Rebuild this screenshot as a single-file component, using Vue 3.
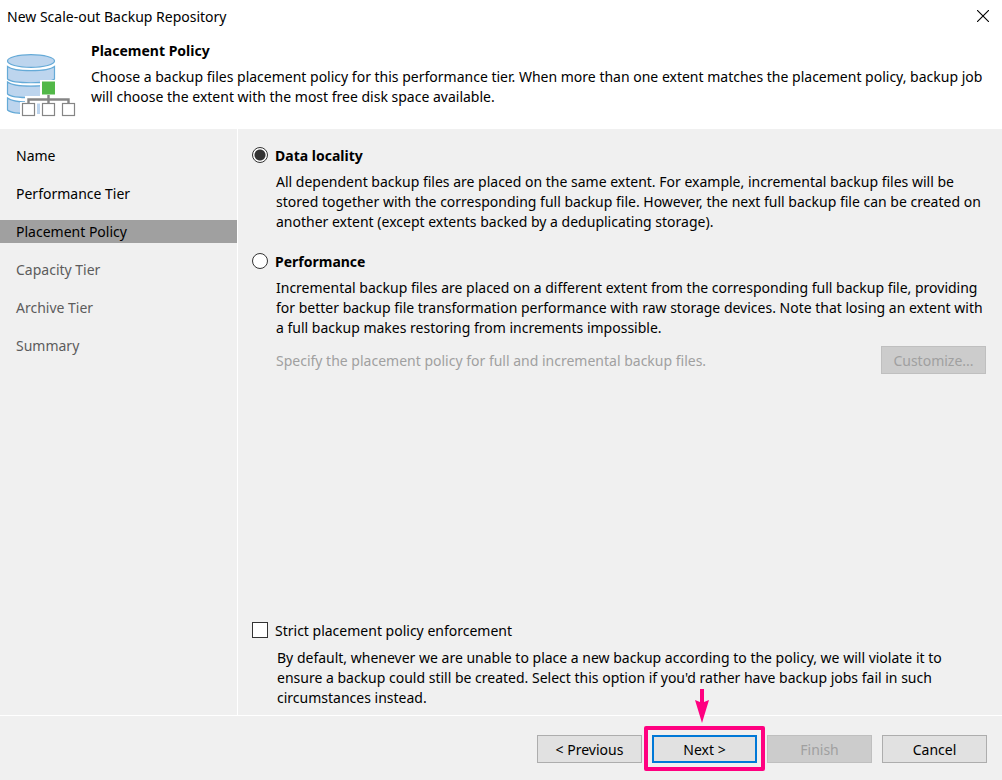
<script setup>
import { ref } from 'vue'

const steps = [
  { label: 'Name', state: 'done' },
  { label: 'Performance Tier', state: 'done' },
  { label: 'Placement Policy', state: 'current' },
  { label: 'Capacity Tier', state: 'pending' },
  { label: 'Archive Tier', state: 'pending' },
  { label: 'Summary', state: 'pending' }
]
const policy = ref('locality')
const strict = ref(false)
</script>

<template>
  <div class="wizard">
    <div class="titlebar">
      <span>New Scale-out Backup Repository</span>
      <button class="close" type="button" aria-label="Close">
        <svg width="12" height="12" viewBox="0 0 12 12"><path d="M0 0 12 12M12 0 0 12" stroke="#000" stroke-width="1.1" /></svg>
      </button>
    </div>

    <header class="header">
      <svg class="logo" width="70" height="66" viewBox="0 0 70 66" aria-hidden="true">
        <g fill="#bdd5ee" stroke="#65aad7" stroke-width="1.2">
          <ellipse cx="25" cy="8" rx="23.5" ry="6.3" />
          <path stroke="none" d="M1.5 14C8 19 42 19 48.5 14V26C43 31 7 31 1.5 26Z" />
          <path stroke="none" d="M1.5 29C8 34 42 34 48.5 29V41C43 46 7 46 1.5 41Z" />
          <path stroke="none" d="M1.5 45C8 50 42 50 48.5 45V57C43 62 7 62 1.5 57Z" />
          <path fill="none" d="M1.5 13.5C8 19 42 19 48.5 13.5V26C43 31 7 31 1.5 26ZM1.5 29C8 34.500 42 34.500 48.500 29V41C43 46 7 46 1.500 41ZM1.500 45C8 50.500 42 50.500 48.500 45V57C43 62 7 62 1.500 57Z" />
        </g>
        <path d="M34 27H50V43H70V65H14V49H19V43H34Z" fill="#fff" />
        <path d="M31 50.500H34V61H31Z" fill="#bdd5ee" />
        <rect x="36" y="28.500" width="13" height="13" fill="#52b848" />
        <path d="M42.500 42V52M22.500 52V46.500H62.500V52" fill="none" stroke="#858585" stroke-width="2.400" />
        <g fill="#fff" stroke="#858585" stroke-width="1.200">
          <rect x="16.500" y="50.500" width="12" height="12" />
          <rect x="36.500" y="50.500" width="12" height="12" />
          <rect x="56.500" y="50.500" width="12" height="12" />
        </g>
      </svg>
      <div class="intro">
        <h1>Placement Policy</h1>
        <p>
          Choose a backup files placement policy for this performance tier. When more than one extent matches the placement policy, backup job<br />
          will choose the extent with the most free disk space available.
        </p>
      </div>
    </header>

    <div class="body">
      <nav class="steps">
        <a
          v-for="step in steps"
          :key="step.label"
          href="#"
          :class="step.state"
          :aria-current="step.state === 'current' ? 'step' : undefined"
        >{{ step.label }}</a>
      </nav>

      <main class="content">
        <label class="choice strong">
          <input v-model="policy" type="radio" name="policy" value="locality" />Data locality
        </label>
        <p class="note">
          All dependent backup files are placed on the same extent. For example, incremental backup files will be<br />
          stored together with the corresponding full backup file. However, the next full backup file can be created on<br />
          another extent (except extents backed by a deduplicating storage).
        </p>

        <label class="choice strong second">
          <input v-model="policy" type="radio" name="policy" value="performance" />Performance
        </label>
        <p class="note">
          Incremental backup files are placed on a different extent from the corresponding full backup file, providing<br />
          for better backup file transformation performance with raw storage devices. Note that losing an extent with<br />
          a full backup makes restoring from increments impossible.
        </p>
        <div class="customize">
          <span>Specify the placement policy for full and incremental backup files.</span>
          <button class="btn" type="button" disabled>Customize...</button>
        </div>

        <label class="choice strict">
          <input v-model="strict" type="checkbox" />Strict placement policy enforcement
        </label>
        <p class="note">
          By default, whenever we are unable to place a new backup according to the policy, we will violate it to<br />
          ensure a backup could still be created. Select this option if you'd rather have backup jobs fail in such<br />
          circumstances instead.
        </p>
      </main>
    </div>

    <footer class="footer">
      <button class="btn" type="button">&lt; Previous</button>
      <div class="target">
        <button class="btn primary" type="button">Next &gt;</button>
        <svg class="arrow" width="14" height="34" viewBox="0 0 14 34" aria-hidden="true">
          <path d="M5 0H9V13L14 11 7 34 0 11 5 13Z" fill="#ff0080" />
        </svg>
      </div>
      <button class="btn" type="button" disabled>Finish</button>
      <button class="btn" type="button">Cancel</button>
    </footer>
  </div>
</template>

<style>
body {
  margin: 0;
}
</style>

<style scoped>
.wizard {
  display: flex;
  flex-direction: column;
  min-height: 100vh;
  background: #f0f0f0;
  color: #000;
  font: 14px/20px "Noto Sans", "Open Sans", sans-serif;
  white-space: nowrap;
}
h1,
p {
  margin: 0;
}
.titlebar {
  display: flex;
  justify-content: space-between;
  align-items: center;
  height: 33px;
  padding: 0 13px 0 7px;
  background: #fff;
}
.close {
  display: flex;
  padding: 0 0 2px;
  border: 0;
  background: none;
}
.header {
  display: flex;
  gap: 15px;
  height: 88px;
  padding: 8px 0 0 6px;
  background: #fff;
}
.logo {
  flex: none;
  margin-top: 12px;
}
h1 {
  margin-bottom: 6px;
  font-size: 14px;
  line-height: 20px;
}
.body {
  display: flex;
  flex: 1;
}
.steps {
  display: flex;
  flex-direction: column;
  gap: 15px;
  box-sizing: border-box;
  width: 238px;
  padding-top: 15px;
  border-right: 1px solid #fff;
}
.steps a {
  padding-left: 16px;
  color: #000;
  line-height: 23px;
  text-decoration: none;
}
.steps .current {
  background: #a0a0a0;
}
.steps .pending {
  color: #5c5c5c;
}
.content {
  display: flex;
  flex: 1;
  flex-direction: column;
  padding: 16px 16px 7px 14px;
}
.choice {
  display: flex;
  align-items: flex-start;
  gap: 7px;
  line-height: 22px;
}
.strong {
  font-weight: 700;
}
.choice input {
  flex: none;
  box-sizing: border-box;
  width: 16px;
  height: 16px;
  margin: 2px 0 0;
  border: 1px solid #333;
  background: #fff;
  appearance: none;
}
.choice input[type="radio"] {
  border-radius: 50%;
}
.choice input[type="radio"]:checked {
  background: radial-gradient(circle, #333 5px, #fff 6px);
}
.choice input[type="checkbox"]:checked {
  background: #333;
}
.note {
  margin: 5px 0 0 24px;
}
.second {
  margin-top: 19px;
}
.customize {
  display: flex;
  justify-content: space-between;
  align-items: center;
  margin: 8px 0 0 24px;
  color: #a0a0a0;
}
.customize span {
  padding-top: 2px;
}
.strict {
  margin-top: auto;
}
.strict + .note {
  margin: 6px 0 0 25px;
}
.btn {
  box-sizing: border-box;
  width: 105px;
  height: 28px;
  padding: 2px 0 0;
  border: 1px solid #adadad;
  background: #e1e1e1;
  color: #000;
  font: inherit;
}
.btn:disabled {
  border-color: #bfbfbf;
  background: #ccc;
  color: #a0a0a0;
}
.primary {
  border: 2px solid #0078d7;
}
.footer {
  display: flex;
  justify-content: flex-end;
  gap: 10px;
  padding: 19px 15px 17px;
  border-top: 1px solid #fff;
}
.target {
  position: relative;
}
.target::after {
  position: absolute;
  inset: -9px -8px -8px;
  border: 4px solid #ff0080;
  border-radius: 2px;
  content: "";
  pointer-events: none;
}
.arrow {
  position: absolute;
  bottom: 40px;
  left: 43px;
}
</style>
